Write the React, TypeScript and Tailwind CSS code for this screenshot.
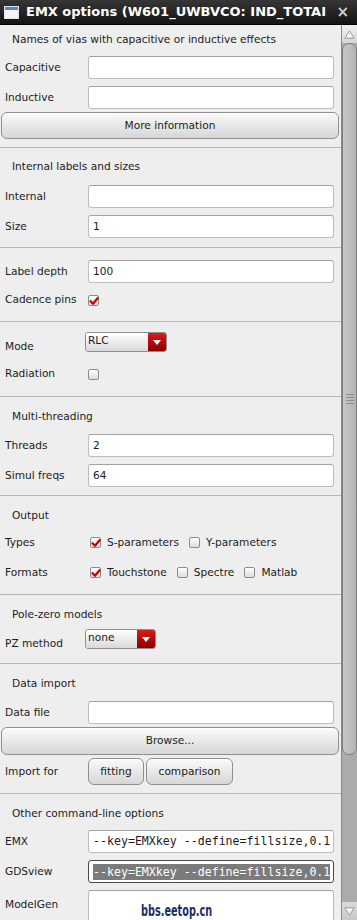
import React from 'react';

// Small building blocks for the Qt-ish options dialog
const Sep = () => <div className="h-px w-full bg-[#b6b6b6]" />;

const Header = ({ text, className }: { text: string; className: string }) => (
	<div className={`flex items-center pl-[12px] ${className}`}>{text}</div>
);

const Field = ({ value = '', mono = false, selected = false }: { value?: string; mono?: boolean; selected?: boolean }) => (
	<div
		className={`flex h-[23px] w-[246px] items-center overflow-hidden rounded-[3px] border bg-white px-[4px] ${
			selected ? 'border-[#4a4a4a]' : 'border-[#bdbdbd] border-t-[#a2a2a2]'
		} ${mono ? "font-['DejaVu_Sans_Mono',monospace] text-[11.6px]" : ''}`}
	>
		{selected ? (
			<>
				<span className="bg-[#7b7b7b] text-white whitespace-pre leading-[16px]">{value}</span>
				<span className="h-[16px] w-px bg-black" />
			</>
		) : (
			<span className="whitespace-pre">{value}</span>
		)}
	</div>
);

const Row = ({ label, children, className = '' }: { label: string; children: React.ReactNode; className?: string }) => (
	<div className={`flex items-center ${className}`}>
		<div className="w-[88px] shrink-0 pl-[5px]">{label}</div>
		{children}
	</div>
);

const Check = ({ on = false }: { on?: boolean }) => (
	<div className="relative h-[11px] w-[11px] shrink-0 rounded-[2px] border border-[#8c8c8c] bg-linear-to-b from-white to-[#dedede]">
		{on && (
			<svg className="absolute -left-[1px] -top-[1px]" width="12" height="12" viewBox="0 0 12 12">
				<path d="M2.5 6.2 L5 8.8 L9.6 3.2" fill="none" stroke="#c40000" strokeWidth="2.2" strokeLinecap="round" strokeLinejoin="round" />
			</svg>
		)}
	</div>
);

const CheckItem = ({ label, on = false, className = '' }: { label: string; on?: boolean; className?: string }) => (
	<div className={`flex items-center gap-[6px] ${className}`}>
		<Check on={on} />
		<span>{label}</span>
	</div>
);

const Combo = ({ value, className }: { value: string; className: string }) => (
	<div className={`flex h-[20px] overflow-hidden rounded-[3px] border border-[#8e8e8e] ${className}`}>
		<div className="flex-1 bg-linear-to-b from-white to-[#d9d9d9] pl-[2px] leading-[15px]">{value}</div>
		<div className="flex w-[18px] items-center justify-center bg-linear-to-b from-[#d81c1c] to-[#8c0000]">
			<svg width="8" height="5" viewBox="0 0 8 5">
				<path d="M0 0 H8 L4 5 Z" fill="white" />
			</svg>
		</div>
	</div>
);

const Btn = ({ text, className }: { text: string; className: string }) => (
	<div
		className={`flex items-center justify-center rounded-[6px] border border-[#8f8f8f] bg-linear-to-b from-[#fbfbfb] to-[#d6d6d6] shadow-[0_1px_0_#ffffff_inset] ${className}`}
	>
		{text}
	</div>
);

const Scrollbar = () => (
	<div className="flex w-[16px] shrink-0 flex-col border-l border-[#8a8a8a] bg-[#ababab]">
		<div className="flex h-[18px] items-center justify-center bg-linear-to-b from-[#f2f2f2] to-[#d6d6d6]">
			<svg width="11" height="9" viewBox="0 0 11 9">
				<path d="M5.5 0.8 L10.2 8.2 H0.8 Z" fill="#f4f4f4" stroke="#9a9a9a" strokeWidth="1" />
			</svg>
		</div>
		<div className="relative mx-auto h-[712px] w-[15px] rounded-[7px] border border-[#7d7d7d] bg-linear-to-r from-[#c6c6c6] to-[#b4b4b4]">
			<div className="absolute left-[3px] top-[350px] flex w-[8px] flex-col gap-[2px]">
				<div className="h-px bg-[#8e8e8e]" />
				<div className="h-px bg-[#8e8e8e]" />
				<div className="h-px bg-[#8e8e8e]" />
				<div className="h-px bg-[#8e8e8e]" />
			</div>
		</div>
		<div className="flex-1" />
		<div className="flex h-[18px] items-center justify-center bg-linear-to-b from-[#dcdcdc] to-[#c8c8c8]">
			<svg width="11" height="9" viewBox="0 0 11 9">
				<path d="M0.8 0.8 H10.2 L5.5 8.2 Z" fill="#f4f4f4" stroke="#9a9a9a" strokeWidth="1" />
			</svg>
		</div>
	</div>
);

export default function App() {
	return (
		<div className="relative h-[920px] w-[357px] overflow-hidden bg-[#eeeeee] font-['DejaVu_Sans',sans-serif] text-[10.6px] text-[#1c1c1c]">
			{/* Title bar */}
			<div className="flex h-[25px] items-center border-b border-black bg-linear-to-b from-[#363636] to-[#141414] pl-[4px] pr-[8px]">
				<svg width="15" height="13" viewBox="0 0 15 13" className="shrink-0">
					<rect x="0.5" y="0.5" width="14" height="12" fill="#f4f6fa" stroke="#dfe4ec" />
					<rect x="1" y="1" width="13" height="3" fill="#5b86c6" />
				</svg>
				<div className="ml-[7px] flex-1 overflow-hidden whitespace-nowrap text-[13px] font-bold text-white">
					EMX options (W601_UWBVCO: IND_TOTAI
				</div>
				<span className="text-[15px] font-bold leading-none text-[#d0d0d0]">×</span>
			</div>

			<div className="flex h-[895px]">
				{/* Content */}
				<div className="flex-1">
					{/* Vias */}
					<div className="pb-[8px]">
						<Header text="Names of vias with capacitive or inductive effects" className="h-[28px] pt-[1px]" />
						<Row label="Capacitive" className="mt-[3px]">
							<Field />
						</Row>
						<Row label="Inductive" className="mt-[7px]">
							<Field />
						</Row>
						<Btn text="More information" className="ml-[1px] mt-[3px] h-[27px] w-[338px]" />
					</div>
					<Sep />

					{/* Internal labels */}
					<div className="pb-[9px]">
						<Header text="Internal labels and sizes" className="h-[37px]" />
						<Row label="Internal">
							<Field />
						</Row>
						<Row label="Size" className="mt-[7px]">
							<Field value="1" />
						</Row>
					</div>
					<Sep />

					<div className="pb-[10px] pt-[12px]">
						<Row label="Label depth">
							<Field value="100" />
						</Row>
						<Row label="Cadence pins" className="mt-[6px] h-[22px]">
							<Check on />
						</Row>
					</div>
					<Sep />

					<div className="pb-[12px] pt-[10px]">
						<div className="flex h-[20px] items-start">
							<div className="w-[85px] shrink-0 pl-[5px] pt-[7px]">Mode</div>
							<Combo value="RLC" className="w-[82px]" />
						</div>
						<Row label="Radiation" className="mt-[12px] h-[20px]">
							<Check />
						</Row>
					</div>
					<Sep />

					{/* Multi-threading */}
					<div className="pb-[8px]">
						<Header text="Multi-threading" className="h-[37px] pt-[3px]" />
						<Row label="Threads">
							<Field value="2" />
						</Row>
						<Row label="Simul freqs" className="mt-[7px]">
							<Field value="64" />
						</Row>
					</div>
					<Sep />

					{/* Output */}
					<div className="pb-[10px]">
						<Header text="Output" className="h-[36px] pt-[3px]" />
						<div className="flex h-[22px] items-center">
							<div className="w-[90px] shrink-0 pl-[5px]">Types</div>
							<CheckItem label="S-parameters" on />
							<CheckItem label="Y-parameters" className="ml-[10px]" />
						</div>
						<div className="mt-[8px] flex h-[22px] items-center">
							<div className="w-[90px] shrink-0 pl-[5px]">Formats</div>
							<CheckItem label="Touchstone" on />
							<CheckItem label="Spectre" className="ml-[10px]" />
							<CheckItem label="Matlab" className="ml-[10px]" />
						</div>
					</div>
					<Sep />

					{/* Pole-zero */}
					<div className="pb-[14px]">
						<Header text="Pole-zero models" className="h-[34px] pt-[6px]" />
						<div className="flex h-[20px] items-start">
							<div className="w-[85px] shrink-0 pl-[5px] pt-[7px]">PZ method</div>
							<Combo value="none" className="w-[71px]" />
						</div>
					</div>
					<Sep />

					{/* Data import */}
					<div className="pb-[8px]">
						<Header text="Data import" className="h-[37px] pt-[3px]" />
						<Row label="Data file">
							<Field />
						</Row>
						<Btn text="Browse..." className="ml-[1px] mt-[3px] h-[28px] w-[338px]" />
						<div className="mt-[3px] flex h-[27px] items-center">
							<div className="w-[88px] shrink-0 pl-[5px]">Import for</div>
							<Btn text="fitting" className="h-[27px] w-[56px]" />
							<Btn text="comparison" className="ml-[2px] h-[27px] w-[87px]" />
						</div>
					</div>
					<Sep />

					{/* Other options */}
					<div>
						<Header text="Other command-line options" className="h-[36px] pt-[3px]" />
						<Row label="EMX">
							<Field value="--key=EMXkey --define=fillsize,0.1" mono />
						</Row>
						<Row label="GDSview" className="mt-[7px]">
							<Field value="--key=EMXkey --define=fillsize,0.1" mono selected />
						</Row>
						<Row label="ModelGen" className="mt-[7px]">
							<div className="h-[30px] w-[246px] rounded-t-[3px] border border-b-0 border-[#bdbdbd] border-t-[#a2a2a2] bg-white" />
						</Row>
					</div>
				</div>

				<Scrollbar />
			</div>

			{/* Watermark over the form */}
			<div className="absolute left-[141px] top-[900px] origin-left scale-x-[0.72] font-['DejaVu_Sans_Condensed',sans-serif] text-[15px] font-bold text-[#1b2f63]">
				bbs.eetop.cn
			</div>
		</div>
	);
}
